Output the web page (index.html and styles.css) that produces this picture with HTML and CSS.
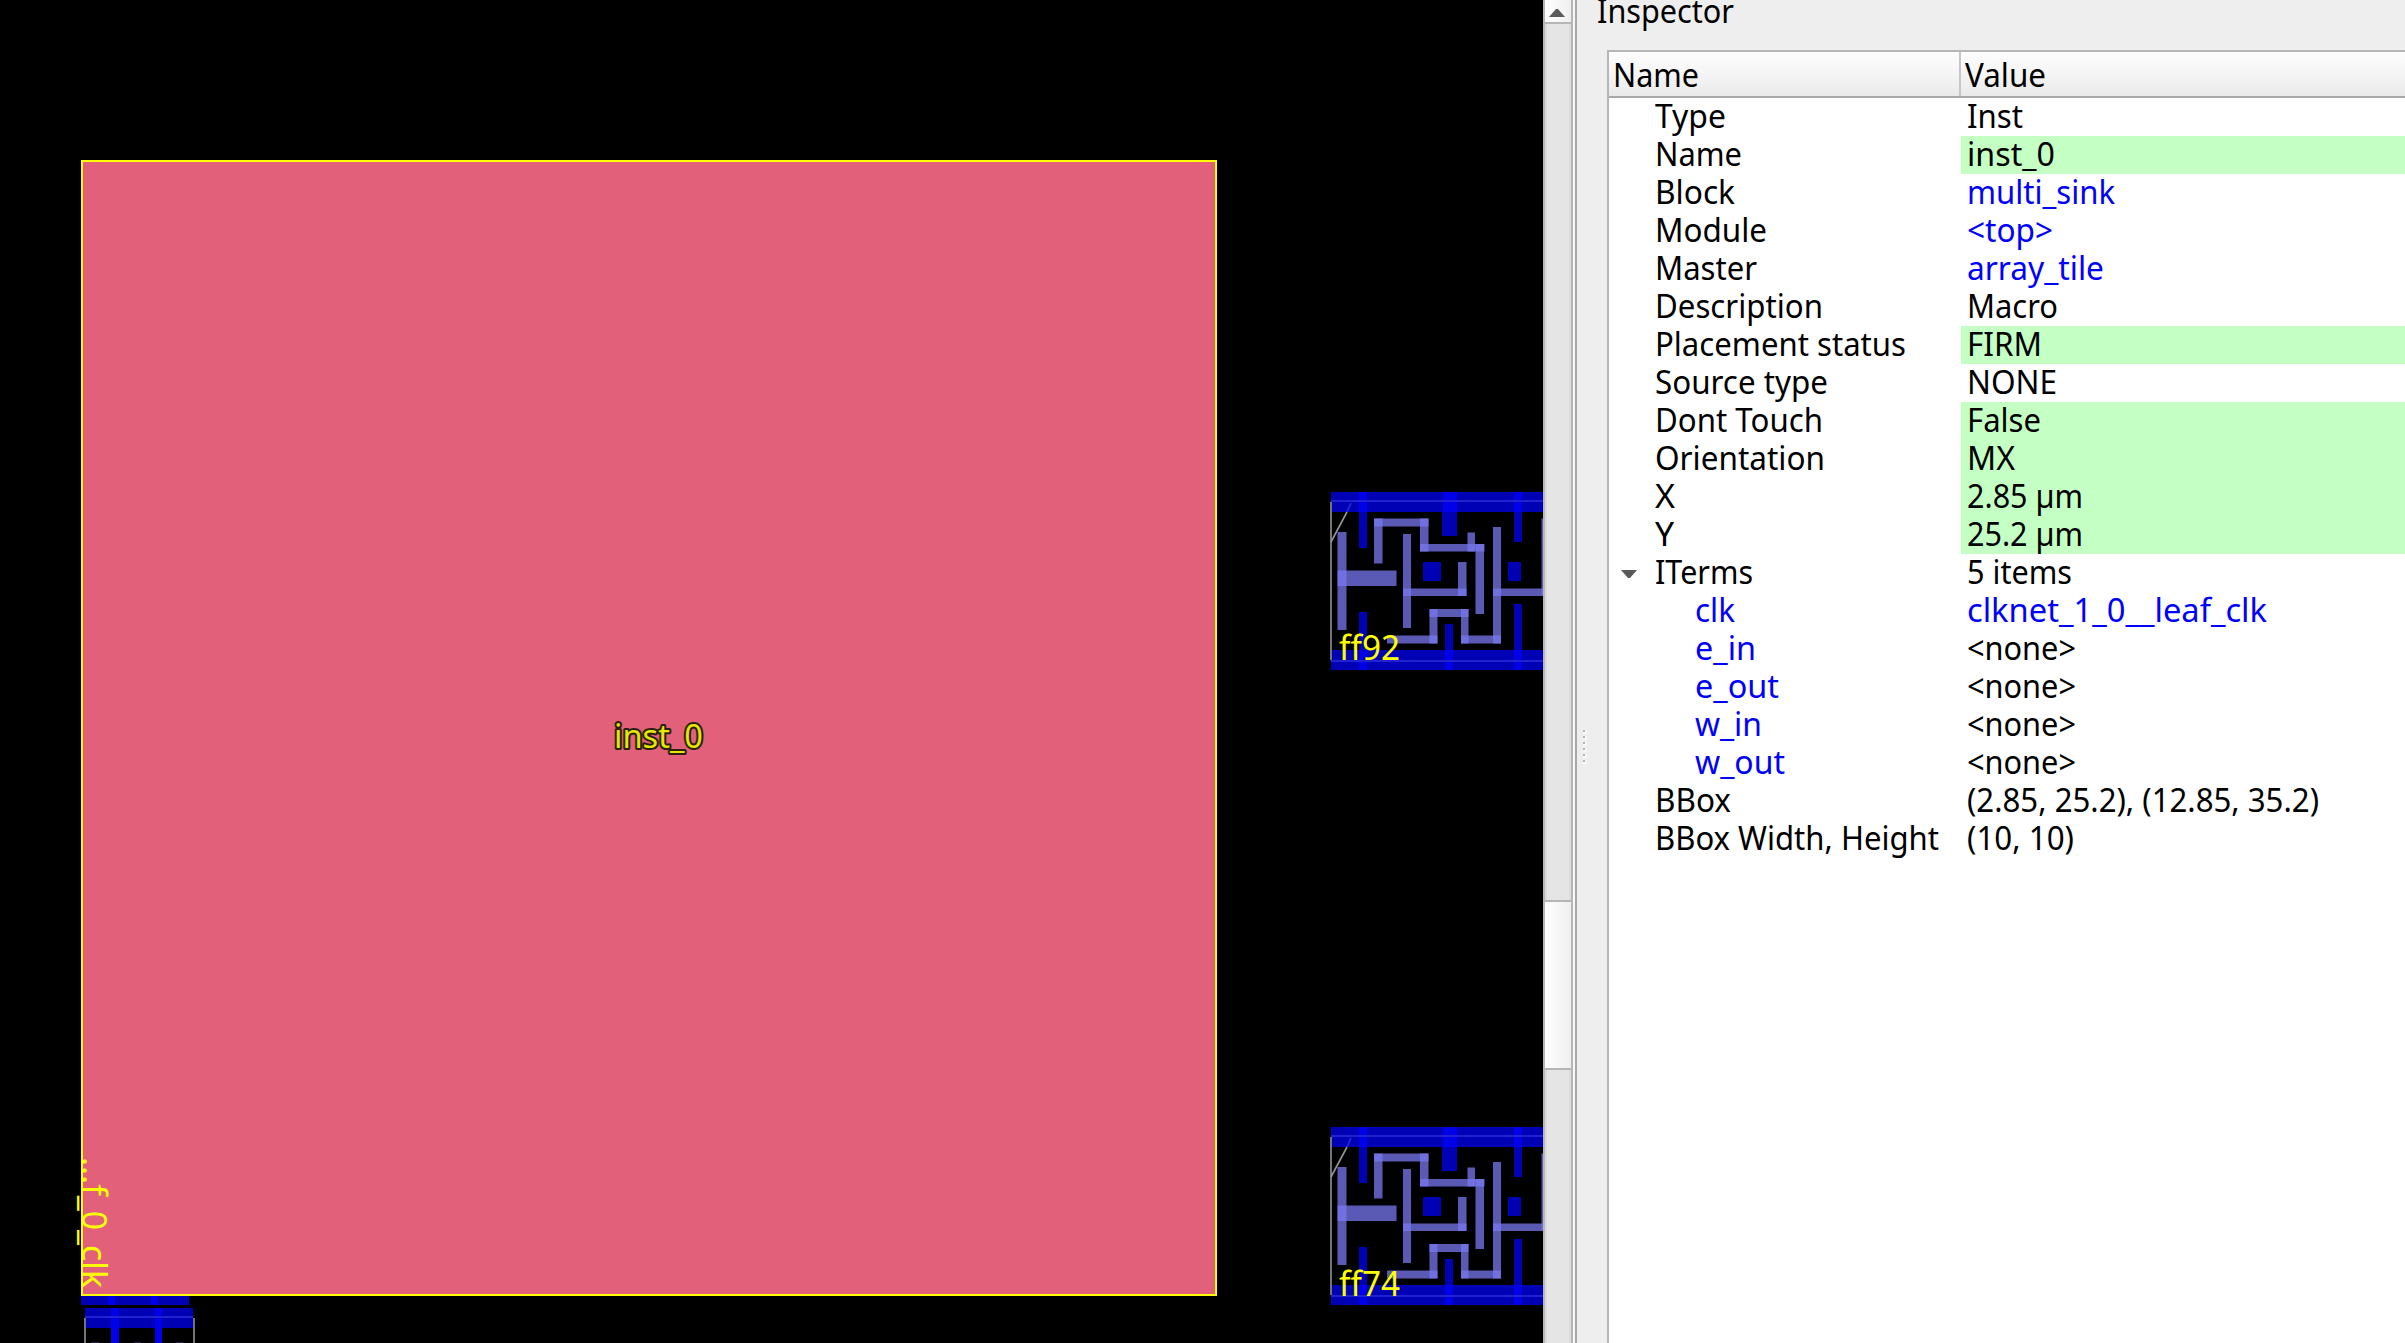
FILE: index.html
```html
<!DOCTYPE html>
<html lang="en">
<head>
<meta charset="utf-8">
<title>Inspector</title>
<link rel="stylesheet" href="styles.css">
</head>
<body>
<main class="window">
  <svg class="canvas" width="1543" height="1343" viewBox="0 0 1543 1343">
    <defs>
      <g id="cell">
        <g class="rail">
          <rect x="21" y="12" width="230" height="20"/>
          <rect x="21" y="170" width="230" height="20"/>
          <rect x="49" y="12" width="8" height="56"/>
          <rect x="49" y="132" width="8" height="58"/>
          <rect x="132" y="12" width="15" height="44"/>
          <rect x="135" y="144" width="8" height="46"/>
          <rect x="204" y="12" width="8" height="50"/>
          <rect x="204" y="124" width="8" height="66"/>
          <rect x="113" y="82" width="18" height="19"/>
          <rect x="198" y="82" width="13" height="19"/>
        </g>
        <g class="cross">
          <rect x="49" y="12" width="8" height="20"/>
          <rect x="49" y="170" width="8" height="20"/>
          <rect x="133" y="12" width="14" height="20"/>
          <rect x="135" y="170" width="8" height="20"/>
          <rect x="204" y="12" width="8" height="20"/>
          <rect x="204" y="170" width="8" height="20"/>
        </g>
        <g class="metal">
          <rect x="27.500" y="52" width="9" height="98"/>
          <rect x="27.500" y="90.500" width="59" height="15.500"/>
          <rect x="64" y="38.500" width="8.500" height="45"/>
          <rect x="64" y="38.500" width="54.500" height="8"/>
          <rect x="110" y="38.500" width="8.500" height="33"/>
          <rect x="110" y="64" width="64.500" height="7.500"/>
          <rect x="157.500" y="52.500" width="7.500" height="19"/>
          <rect x="165.500" y="64" width="8.500" height="70"/>
          <rect x="93" y="54" width="8" height="94"/>
          <rect x="93" y="108.500" width="63.500" height="7.500"/>
          <rect x="148" y="82" width="8.500" height="34"/>
          <rect x="183" y="47" width="8" height="116.500"/>
          <rect x="183" y="108.500" width="60" height="7.500"/>
          <rect x="231.500" y="38.500" width="8" height="77"/>
          <rect x="77" y="155.500" width="50.500" height="8"/>
          <rect x="119.500" y="129" width="8" height="34.500"/>
          <rect x="119.500" y="129" width="39" height="8"/>
          <rect x="151" y="129" width="7.500" height="34.500"/>
          <rect x="151" y="155.500" width="40" height="8"/>
        </g>
        <path class="outline" d="M21 22V180"/>
        <path class="notch" d="M21 62L37 32"/>
        <path class="edge" d="M21 21H251M21 181H251M41 23L37 32"/>
      </g>
    </defs>
    <use href="#cell" x="1310" y="480"/>
    <use href="#cell" x="1310" y="1115"/>
    <text class="label" x="1339" y="660" textLength="61" lengthAdjust="spacingAndGlyphs">ff92</text>
    <text class="label" x="1339" y="1296" textLength="61" lengthAdjust="spacingAndGlyphs">ff74</text>

    <g class="rail">
      <rect x="81" y="1296" width="108" height="9"/>
      <rect x="85" y="1308" width="108" height="20"/>
      <rect x="111" y="1328" width="8" height="15"/>
      <rect x="155" y="1328" width="6" height="15"/>
    </g>
    <g class="cross">
      <rect x="108" y="1296" width="7" height="9"/>
      <rect x="151" y="1296" width="7" height="9"/>
      <rect x="111" y="1308" width="8" height="35"/>
      <rect x="155" y="1308" width="7" height="35"/>
    </g>
    <path class="edge" d="M85 1317H193"/>
    <path class="outline" d="M85 1318V1343M194 1318V1343"/>
    <path class="stub" d="M91 1342.500H99M134 1342.500H141M176 1342.500H183"/>
    <rect class="macro" x="82" y="161" width="1134" height="1134"/>
    <text class="macro-name" x="614" y="748" textLength="89" lengthAdjust="spacingAndGlyphs">inst_0</text>
    <text class="label" transform="translate(82 1157) rotate(90)" textLength="131" lengthAdjust="spacingAndGlyphs">...f_0_clk</text>
  </svg>

  <div class="scrollbar">
    <div class="step"><svg width="16" height="8" viewBox="0 0 16 8"><path d="M0 8L7 0H9L16 8Z"/></svg></div>
    <div class="track"></div>
    <div class="thumb"></div>
    <div class="track"></div>
  </div>
  <div class="splitter"><i></i><i></i><i></i><i></i><i></i><i></i></div>

  <section class="dock">
    <h1 class="title"><span data-w="137">Inspector</span></h1>
    <div class="tree">
      <div class="row head"><div class="key"><span data-w="86">Name</span></div><div class="val"><span data-w="81">Value</span></div></div>
      <div class="row"><div class="key"><span data-w="71">Type</span></div><div class="val"><span data-w="56">Inst</span></div></div>
      <div class="row"><div class="key"><span data-w="87">Name</span></div><div class="val edit"><span data-w="88">inst_0</span></div></div>
      <div class="row"><div class="key"><span data-w="80">Block</span></div><div class="val link"><span data-w="148">multi_sink</span></div></div>
      <div class="row"><div class="key"><span data-w="112">Module</span></div><div class="val link"><span data-w="86">&lt;top&gt;</span></div></div>
      <div class="row"><div class="key"><span data-w="102">Master</span></div><div class="val link"><span data-w="137">array_tile</span></div></div>
      <div class="row"><div class="key"><span data-w="168">Description</span></div><div class="val"><span data-w="91">Macro</span></div></div>
      <div class="row"><div class="key"><span data-w="251">Placement status</span></div><div class="val edit"><span data-w="75">FIRM</span></div></div>
      <div class="row"><div class="key"><span data-w="173">Source type</span></div><div class="val"><span data-w="90">NONE</span></div></div>
      <div class="row"><div class="key"><span data-w="168">Dont Touch</span></div><div class="val edit"><span data-w="74">False</span></div></div>
      <div class="row"><div class="key"><span data-w="170">Orientation</span></div><div class="val edit"><span data-w="48">MX</span></div></div>
      <div class="row"><div class="key"><span data-w="20">X</span></div><div class="val edit"><span data-w="116">2.85 µm</span></div></div>
      <div class="row"><div class="key"><span data-w="19">Y</span></div><div class="val edit"><span data-w="116">25.2 µm</span></div></div>
      <div class="row open"><div class="key"><svg class="arrow" width="16" height="8" viewBox="0 0 16 8"><path d="M0 0H16L9 8H7Z"/></svg><span data-w="98">ITerms</span></div><div class="val"><span data-w="105">5 items</span></div></div>
      <div class="row child"><div class="key link"><span data-w="40">clk</span></div><div class="val link"><span data-w="300">clknet_1_0__leaf_clk</span></div></div>
      <div class="row child"><div class="key link"><span data-w="61">e_in</span></div><div class="val"><span data-w="109">&lt;none&gt;</span></div></div>
      <div class="row child"><div class="key link"><span data-w="84">e_out</span></div><div class="val"><span data-w="109">&lt;none&gt;</span></div></div>
      <div class="row child"><div class="key link"><span data-w="67">w_in</span></div><div class="val"><span data-w="109">&lt;none&gt;</span></div></div>
      <div class="row child"><div class="key link"><span data-w="90">w_out</span></div><div class="val"><span data-w="109">&lt;none&gt;</span></div></div>
      <div class="row"><div class="key"><span data-w="76">BBox</span></div><div class="val"><span data-w="352">(2.85, 25.2), (12.85, 35.2)</span></div></div>
      <div class="row"><div class="key"><span data-w="284">BBox Width, Height</span></div><div class="val"><span data-w="107">(10, 10)</span></div></div>
    </div>
  </section>
</main>
<script src="fit.js"></script>
</body>
</html>
```
FILE: styles.css
```css
* { box-sizing: border-box; }
body { margin: 0; background: #eee; overflow: hidden; }

.window {
  display: flex;
  width: 2405px;
  height: 1343px;
  overflow: hidden;
  font-family: "Noto Sans", "Open Sans", sans-serif;
  font-size: 33.5px;
  color: #000;
}

/* layout canvas */
.canvas { flex: none; background: #000; font-family: "Noto Sans", sans-serif; }
.rail { fill: #0000b4; }
.cross { fill: #0000eb; }
.metal { fill: #7878f0; fill-opacity: .75; }
.outline { fill: none; stroke: #747474; stroke-width: 2; }
.notch { fill: none; stroke: #969696; stroke-width: 1.6; }
.edge { fill: none; stroke: #2222d0; stroke-width: 2; }
.stub { fill: none; stroke: #24244a; stroke-width: 1; }
.label { fill: #ff0; font-size: 34px; font-weight: 400; }
.macro { fill: #e2607a; stroke: #ff0; stroke-width: 2; }
.macro-name {
  fill: #e6e600;
  font-size: 32px;
  stroke: #28200c;
  stroke-width: 4;
  stroke-linejoin: round;
  paint-order: stroke;
}

/* scrollbar */
.scrollbar {
  flex: none;
  display: flex;
  flex-direction: column;
  width: 30px;
  border-left: 2px solid #b6b6b6;
  border-right: 2px solid #b6b6b6;
}
.step {
  height: 24px;
  padding: 4px 0 0 4px;
  border-bottom: 2px solid #b6b6b6;
  background: linear-gradient(90deg, #fff, #efefef);
  line-height: 0;
}
.step path, .arrow path { fill: #5a5a5a; }
.track { flex: 1 1 0; background: linear-gradient(90deg, #dadada 0 2px, #e5e5e5 2px 24px, #dcdcdc 24px); }
.step + .track { flex: none; height: 876px; }
.thumb {
  height: 170px;
  border-top: 2px solid #b6b6b6;
  border-bottom: 2px solid #b6b6b6;
  background: linear-gradient(90deg, #fff, #efefef);
}

.splitter {
  flex: none;
  display: flex;
  flex-direction: column;
  justify-content: flex-start;
  gap: 4px;
  width: 34px;
  padding: 730px 0 0 8px;
  border-left: 2px solid #f8f8f8;
  background: linear-gradient(90deg, #a8a8a8 0 2px, #eee 2px);
}
.splitter i { width: 2px; height: 2px; background: #b4b4b4; box-shadow: 1px 1px 0 1px #f8f8f8; }

/* inspector dock */
.dock { flex: 1; min-width: 0; }
.title {
  height: 50px;
  margin: 0 0 0 -10px;
  font: inherit;
  line-height: 20px;
}
.tree {
  height: 1293px;
  border-top: 2px solid #b6b6b6;
  border-left: 2px solid #b6b6b6;
  background: #fff;
}
.row { display: grid; grid-template-columns: 352px 1fr; height: 38px; line-height: 35px; }
.key, .val { display: flex; align-items: flex-start; white-space: nowrap; }
.key { padding-left: 46px; }
.val { padding-left: 6px; }
.child .key { padding-left: 86px; }
.open .key { padding-left: 12px; }
.arrow { flex: none; margin: 16px 18px 0 0; }
.edit { background: #c4ffc4; }
.link { color: #00f; }
.head {
  height: 46px;
  line-height: 44px;
  border-bottom: 2px solid #a8a8a8;
  background: linear-gradient(#fdfdfd, #f5f5f5 50%, #e9e9e9);
}
.head .key { padding-left: 4px; border-right: 2px solid #c6c6c6; }
.head .val { padding-left: 4px; }
[data-w] { display: inline-block; flex: none; transform-origin: 0 50%; white-space: nowrap; }
```
FILE: fit.js
```js
document.querySelectorAll("[data-w]").forEach(function (el) {
  var natural = el.getBoundingClientRect().width;
  el.style.transform = "scaleX(" + (el.dataset.w / natural) + ")";
});
```
